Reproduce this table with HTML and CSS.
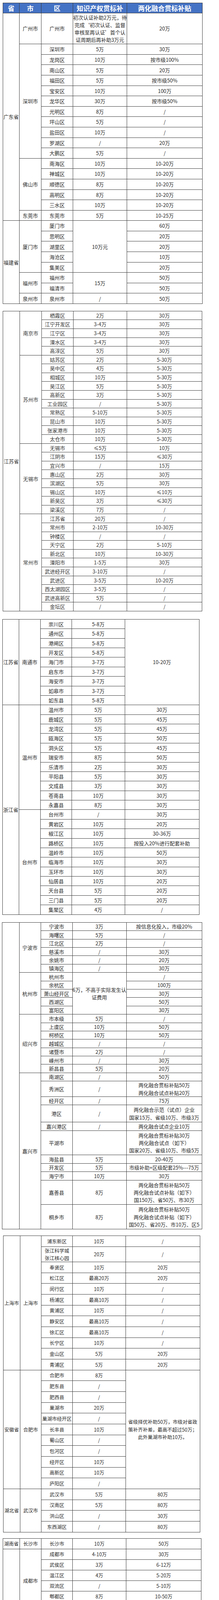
FILE: index.html
```html
<!DOCTYPE html>
<html lang="zh-CN">
<head>
<meta charset="utf-8">
<title>各地贯标补贴汇总</title>
<link rel="stylesheet" href="styles.css">
</head>
<body>
<div class="page">

<table class="grid t1">
<colgroup><col class="c1"><col class="c2"><col class="c3"><col class="c4"><col class="c5"></colgroup>
<tr class="head"><th>省</th><th>市</th><th>区</th><th>知识产权贯标补</th><th>两化融合贯标补贴</th></tr>
<tr class="tall"><td rowspan="18">广东省</td><td>广州市</td><td>广州市</td><td>初次认证补助2万元，待<br>完成‘初次认证、监督<br>审核至再认证’首个认<br>证周期后再补助3万元</td><td>20万</td></tr>
<tr><td rowspan="11">深圳市</td><td>深圳市</td><td>5万</td><td>30万</td></tr>
<tr><td>龙岗区</td><td>10万</td><td>按市级100%</td></tr>
<tr><td>南山区</td><td>5万</td><td>20万</td></tr>
<tr><td>福田区</td><td>5万</td><td>按市级50%</td></tr>
<tr><td>宝安区</td><td>10万</td><td>100万</td></tr>
<tr><td>龙华区</td><td>30万</td><td>按市级50%</td></tr>
<tr><td>光明区</td><td>8万</td><td>/</td></tr>
<tr><td>坪山区</td><td>5万</td><td>/</td></tr>
<tr><td>盐田区</td><td>10万</td><td>/</td></tr>
<tr><td>罗湖区</td><td>/</td><td>20万</td></tr>
<tr><td>大鹏区</td><td>5万</td><td>/</td></tr>
<tr><td rowspan="5">佛山市</td><td>南海区</td><td>10万</td><td>10-20万</td></tr>
<tr><td>禅城区</td><td>10万</td><td>10-20万</td></tr>
<tr><td>顺德区</td><td>8万</td><td>10-20万</td></tr>
<tr><td>高明区</td><td>8万</td><td>10-20万</td></tr>
<tr><td>三水区</td><td>10万</td><td>10-20万</td></tr>
<tr><td>东莞市</td><td>东莞市</td><td>5万</td><td>10-25万</td></tr>
<tr><td rowspan="8">福建省</td><td rowspan="5">厦门市</td><td>厦门市</td><td rowspan="5">10万元</td><td>60万</td></tr>
<tr><td>思明区</td><td>20万</td></tr>
<tr><td>湖里区</td><td>20万</td></tr>
<tr><td>海沧区</td><td>10万</td></tr>
<tr><td>集美区</td><td>20万</td></tr>
<tr><td rowspan="2">福州市</td><td>福州市</td><td rowspan="2">15万</td><td>50万</td></tr>
<tr><td>福清市</td><td>50万</td></tr>
<tr><td>泉州市</td><td>泉州市</td><td>/</td><td>50万</td></tr>
</table>

<table class="grid t2">
<colgroup><col class="c1"><col class="c2"><col class="c3"><col class="c4"><col class="c5"></colgroup>
<tr><td rowspan="34">江苏省</td><td rowspan="5">南京市</td><td>栖霞区</td><td>2万</td><td>30万</td></tr>
<tr><td>江宁开发区</td><td>3-4万</td><td>30万</td></tr>
<tr><td>江宁区</td><td>3-4万</td><td>30万</td></tr>
<tr><td>溧水区</td><td>3-4万</td><td>30万</td></tr>
<tr><td>高淳区</td><td>5万</td><td>30万</td></tr>
<tr><td rowspan="10">苏州市</td><td>姑苏区</td><td>2万</td><td>5-30万</td></tr>
<tr><td>吴中区</td><td>4万</td><td>5-30万</td></tr>
<tr><td>相城区</td><td>10万</td><td>5-30万</td></tr>
<tr><td>吴江区</td><td>5万</td><td>5-30万</td></tr>
<tr><td>高新区</td><td>3万</td><td>5-30万</td></tr>
<tr><td>工业园区</td><td>/</td><td>5-30万</td></tr>
<tr><td>常熟区</td><td>5-10万</td><td>5-30万</td></tr>
<tr><td>昆山市</td><td>10万</td><td>5-30万</td></tr>
<tr><td>张家港市</td><td>10万</td><td>5-30万</td></tr>
<tr><td>太仓市</td><td>10万</td><td>5-30万</td></tr>
<tr><td rowspan="8">无锡市</td><td>无锡市</td><td>≤5万</td><td>10万</td></tr>
<tr><td>江阴市</td><td>15万</td><td>≤30万</td></tr>
<tr><td>宜兴市</td><td>/</td><td>15万</td></tr>
<tr><td>惠山区</td><td>2万</td><td>30万</td></tr>
<tr><td>滨湖区</td><td>5万</td><td>30万</td></tr>
<tr><td>锡山区</td><td>10万</td><td>≤10万</td></tr>
<tr><td>新吴区</td><td>3万</td><td>≤30万</td></tr>
<tr><td>梁溪区</td><td>7万</td><td>/</td></tr>
<tr><td rowspan="11">常州市</td><td>江苏省</td><td>20万</td><td>/</td></tr>
<tr><td>常州市</td><td>2-10万</td><td>10-30万</td></tr>
<tr><td>钟楼区</td><td>/</td><td>/</td></tr>
<tr><td>天宁区</td><td>2万</td><td>5-10万</td></tr>
<tr><td>新北区</td><td>10万</td><td>10-30万</td></tr>
<tr><td>溧阳市</td><td>1-5万</td><td>30万</td></tr>
<tr><td>武进经开区</td><td>3-10万</td><td>/</td></tr>
<tr><td>武进区</td><td>3-5万</td><td>10-20万</td></tr>
<tr><td>西太湖园区</td><td>3-5万</td><td>/</td></tr>
<tr><td>武进高新区</td><td>5万</td><td>/</td></tr>
<tr><td>金坛区</td><td>/</td><td>/</td></tr>
</table>

<table class="grid t3">
<colgroup><col class="c1"><col class="c2"><col class="c3"><col class="c4"><col class="c5"></colgroup>
<tr><td rowspan="9">江苏省</td><td rowspan="9">南通市</td><td>崇川区</td><td>5-8万</td><td rowspan="9">10-20万</td></tr>
<tr><td>通州区</td><td>5-8万</td></tr>
<tr><td>港闸区</td><td>5-8万</td></tr>
<tr><td>开发区</td><td>5-8万</td></tr>
<tr><td>海门市</td><td>3-7万</td></tr>
<tr><td>启东市</td><td>3-7万</td></tr>
<tr><td>海安市</td><td>3-7万</td></tr>
<tr><td>如皋市</td><td>3-7万</td></tr>
<tr><td>如东县</td><td>5-8万</td></tr>
<tr><td rowspan="22">浙江省</td><td rowspan="11">温州市</td><td>温州市</td><td>5万</td><td>30万</td></tr>
<tr><td>鹿城区</td><td>5万</td><td>45万</td></tr>
<tr><td>龙湾区</td><td>5万</td><td>45万</td></tr>
<tr><td>瓯海区</td><td>5万</td><td>50万</td></tr>
<tr><td>洞头区</td><td>5万</td><td>45万</td></tr>
<tr><td>瑞安市</td><td>8万</td><td>50万</td></tr>
<tr><td>乐清市</td><td>2万</td><td>30万</td></tr>
<tr><td>平阳县</td><td>5万</td><td>30万</td></tr>
<tr><td>文成县</td><td>3万</td><td>30万</td></tr>
<tr><td>苍南县</td><td>10万</td><td>30万</td></tr>
<tr><td>永嘉县</td><td>8万</td><td>30万</td></tr>
<tr><td rowspan="11">台州市</td><td>台州市</td><td>/</td><td>30万</td></tr>
<tr><td>黄岩区</td><td>10万</td><td>20万</td></tr>
<tr><td>椒江区</td><td>10万</td><td>30-36万</td></tr>
<tr><td>路桥区</td><td>10万</td><td>按投入20%进行配套补助</td></tr>
<tr><td>温岭市</td><td>10万</td><td>50万</td></tr>
<tr><td>临海市</td><td>10万</td><td>30万</td></tr>
<tr><td>玉环市</td><td>10万</td><td>30万</td></tr>
<tr><td>仙居县</td><td>10万</td><td>20万</td></tr>
<tr><td>天台县</td><td>5万</td><td>20万</td></tr>
<tr><td>三门县</td><td>5万</td><td>20万</td></tr>
<tr><td>集聚区</td><td>4万</td><td>/</td></tr>
</table>

<table class="grid t4">
<colgroup><col class="c1"><col class="c2"><col class="c3"><col class="c4"><col class="c5"></colgroup>
<tr><td rowspan="29"></td><td rowspan="6">宁波市</td><td>宁波市</td><td>3万</td><td>按信息化投入，市级20%</td></tr>
<tr><td>海曙区</td><td>5万</td><td>/</td></tr>
<tr><td>江北区</td><td>2万</td><td>/</td></tr>
<tr><td>慈溪市</td><td>/</td><td>30万</td></tr>
<tr><td>余姚市</td><td>/</td><td>20万</td></tr>
<tr><td>镇海区</td><td>/</td><td>30万</td></tr>
<tr><td rowspan="5">杭州市</td><td>杭州市</td><td rowspan="5">6万，不高于实际发生认<br>证费用</td><td>/</td></tr>
<tr><td>余杭区</td><td>100万</td></tr>
<tr><td>萧山经开区</td><td>30万</td></tr>
<tr><td>西湖区</td><td>50万</td></tr>
<tr><td>富阳区</td><td>30万</td></tr>
<tr><td rowspan="7">绍兴市</td><td>市本级</td><td>5万</td><td>/</td></tr>
<tr><td>上虞区</td><td>10万</td><td>50万</td></tr>
<tr><td>柯桥区</td><td>10万</td><td>50万</td></tr>
<tr><td>越城区</td><td>/</td><td>/</td></tr>
<tr><td>诸暨市</td><td>2万</td><td>/</td></tr>
<tr><td>嵊州市</td><td>/</td><td>30万</td></tr>
<tr><td>新昌县</td><td>5万</td><td>20万</td></tr>
<tr><td rowspan="11">嘉兴市</td><td>南湖区</td><td>/</td><td>50万</td></tr>
<tr class="l2a"><td>秀洲区</td><td>/</td><td>两化融合贯标补贴50万<br>两化融合试点补贴20万</td></tr>
<tr><td>经开区</td><td>/</td><td>75万</td></tr>
<tr class="l2b"><td>港区</td><td>/</td><td>两化融合示范（试点）企业<br>国家15万、省级10万、市级3万</td></tr>
<tr><td>嘉兴港区</td><td>/</td><td>两化融合试点企业10万</td></tr>
<tr class="l3"><td>平湖市</td><td></td><td>两化融合贯标补贴30万<br>两化融合试点（如下）<br>国家20万、省级10万、市级5万</td></tr>
<tr><td>海盐县</td><td>5万</td><td>20-40万</td></tr>
<tr><td>开发区</td><td>5万</td><td>市级补助+区级配套25%---75万</td></tr>
<tr><td>海宁市</td><td>10万</td><td>30万</td></tr>
<tr class="l3"><td>嘉善县</td><td>8万</td><td>两化融合贯标补贴50万<br>两化融合试点补贴（如下）<br>国150万、省50万、市30万</td></tr>
<tr class="l3"><td>桐乡市</td><td>8万</td><td>两化融合贯标补贴50万<br>两化融合试点补贴（如下）<br>国50万、省20万、市10万、区5</td></tr>
</table>

<table class="grid t5">
<colgroup><col class="c1"><col class="c2"><col class="c3"><col class="c4"><col class="c5"></colgroup>
<tr><td rowspan="12">上海市</td><td rowspan="12">上海市</td><td>浦东新区</td><td>10万</td><td>/</td></tr>
<tr class="l2"><td>张江科学城<br>张江核心园</td><td>20万</td><td>/</td></tr>
<tr><td>奉贤区</td><td>10万</td><td>20万</td></tr>
<tr><td>松江区</td><td>最高20万</td><td>20万</td></tr>
<tr><td>闵行区</td><td>10万</td><td>/</td></tr>
<tr><td>杨浦区</td><td>最高10万</td><td>/</td></tr>
<tr><td>黄浦区</td><td>10万</td><td>/</td></tr>
<tr><td>静安区</td><td>最高10万</td><td>/</td></tr>
<tr><td>徐汇区</td><td>最高10万</td><td>/</td></tr>
<tr><td>长宁区</td><td>10万</td><td>/</td></tr>
<tr><td>金山区</td><td>5万</td><td>20万</td></tr>
<tr><td>青浦区</td><td>5万</td><td>20万</td></tr>
<tr><td rowspan="11">安徽省</td><td rowspan="11">合肥市</td><td>合肥市</td><td>8万</td><td rowspan="11">省级择优补助50万，市级对省政<br>策补齐补差，最高不超过50万；<br>此外巢湖市补助10万。</td></tr>
<tr><td>肥东县</td><td>/</td></tr>
<tr><td>肥西县</td><td>/</td></tr>
<tr><td>巢湖市</td><td>20万</td></tr>
<tr><td>巢湖市经开区</td><td>/</td></tr>
<tr><td>长丰县</td><td>10万</td></tr>
<tr><td>蜀山区</td><td>/</td></tr>
<tr><td>包河区</td><td>/</td></tr>
<tr><td>经开区</td><td>10万</td></tr>
<tr><td>高新区</td><td>10万</td></tr>
<tr><td>庐阳区</td><td>/</td></tr>
<tr><td rowspan="4">湖北省</td><td rowspan="4">武汉市</td><td>武汉市</td><td>5万</td><td>80万</td></tr>
<tr><td>汉南区</td><td>5万</td><td>80万</td></tr>
<tr><td>洪山区</td><td>/</td><td>30万</td></tr>
<tr><td>东西湖区</td><td>/</td><td>80万</td></tr>
</table>

<table class="grid t6">
<colgroup><col class="c1"><col class="c2"><col class="c3"><col class="c4"><col class="c5"></colgroup>
<tr><td>湖南省</td><td>长沙市</td><td>长沙市</td><td>10万</td><td>50万</td></tr>
<tr><td rowspan="12">四川省</td><td rowspan="6">成都市</td><td>成都市</td><td>4-10万</td><td>30万</td></tr>
<tr><td>武侯区</td><td>3万</td><td>6-12万</td></tr>
<tr><td>温江区</td><td>4万</td><td>5-20万</td></tr>
<tr><td>双流区</td><td>/</td><td>5-10万</td></tr>
<tr><td>郫都区</td><td>8万</td><td>10-50万</td></tr>
<tr><td>高新区</td><td>2万</td><td>/</td></tr>
<tr><td>眉山市</td><td>东坡区</td><td>/</td><td>10-50万</td></tr>
<tr><td>泸州市</td><td>泸州市</td><td>/</td><td>20-30万</td></tr>
<tr><td>德阳市</td><td>德阳市</td><td>/</td><td>10万</td></tr>
<tr><td>遂宁市</td><td>遂宁市</td><td>/</td><td>10-20万</td></tr>
<tr><td>乐山市</td><td>乐山市</td><td>/</td><td>10-20万</td></tr>
<tr><td>南充市</td><td>南充市</td><td>/</td><td>最高50万</td></tr>
<tr><td rowspan="15">重庆市</td><td rowspan="15">重庆市</td><td>重庆市</td><td>3万</td><td rowspan="15">30万</td></tr>
<tr><td>九龙坡</td><td>5万</td></tr>
<tr><td>南岸区</td><td>5万</td></tr>
<tr><td>渝北区</td><td>5万</td></tr>
<tr><td>渝中区</td><td>/</td></tr>
<tr><td>江北区</td><td>10万</td></tr>
<tr><td>两江新区</td><td>10万</td></tr>
<tr><td>大足区</td><td>5万</td></tr>
<tr><td>铜梁区</td><td>8万</td></tr>
<tr><td>梁平区</td><td>5万</td></tr>
<tr><td>忠县</td><td>5万</td></tr>
<tr><td>万盛经开区</td><td>5万</td></tr>
<tr><td>潼南区</td><td>5万 已经取消</td></tr>
<tr><td>合川区</td><td>20万</td></tr>
<tr><td>长寿区</td><td>10万</td></tr>
</table>

<table class="grid t7">
<colgroup><col class="c1"><col class="c2"><col class="c3"><col class="c4"><col class="c5"></colgroup>
<tr><td rowspan="8">山东省</td><td>济南市</td><td>济南市</td><td>5万-10万</td><td>45万（市30万，区配套15万）</td></tr>
<tr><td rowspan="4">青岛市</td><td>城阳区</td><td>/</td><td>50万</td></tr>
<tr><td>即墨区</td><td>/</td><td>50万</td></tr>
<tr><td>胶州市</td><td>/</td><td>50万</td></tr>
<tr><td>黄岛区</td><td>/</td><td>50万</td></tr>
<tr><td>烟台市</td><td>开发区</td><td>10万</td><td>/</td></tr>
<tr><td>烟台市</td><td>芝罘区</td><td>10万</td><td>/</td></tr>
<tr><td>威海市</td><td>环翠区</td><td>5万</td><td>15万</td></tr>
<tr><td>陕西省</td><td>西安市</td><td>西安市</td><td>5-10万</td><td>20-30万</td></tr>
<tr><td rowspan="9">河南省</td><td rowspan="9">郑州市</td><td>郑州市</td><td>5-10万</td><td rowspan="9">省100万，市50万</td></tr>
<tr><td>二七区</td><td>10万</td></tr>
<tr><td>新密市</td><td>10万</td></tr>
<tr><td>荥阳市</td><td>5-15万</td></tr>
<tr><td>郑东新区</td><td>10万</td></tr>
<tr><td>航空港区</td><td>20万</td></tr>
<tr><td>中牟县</td><td>10万</td></tr>
<tr><td>高新区</td><td>10万</td></tr>
<tr><td>上街区</td><td>20万</td></tr>
<tr><td>天津市</td><td>天津市</td><td>天津市</td><td>/</td><td>试点和贯标共同通过，最高50万</td></tr>
<tr><td rowspan="2">河北省</td><td>石家庄</td><td>石家庄市</td><td>6-10万</td><td>/</td></tr>
<tr><td>唐山市</td><td>唐山市</td><td>6万</td><td>10万-30万</td></tr>
<tr><td rowspan="8">北京市</td><td rowspan="8">北京市</td><td>朝阳区</td><td>15万</td><td rowspan="8">30万（先做试点才有资金补贴，<br>未做试点的无资金补贴）</td></tr>
<tr><td>通州区</td><td>10万</td></tr>
<tr><td>昌平区</td><td>5万</td></tr>
<tr><td>丰台区</td><td>5万</td></tr>
<tr><td>西城区</td><td>5万</td></tr>
<tr><td>海淀区</td><td>不超过10万</td></tr>
<tr><td>大兴区</td><td>8万</td></tr>
<tr><td>顺义区</td><td>10万</td></tr>
</table>

</div>
</body>
</html>
```

FILE: styles.css
```css
html, body {
  margin: 0;
  padding: 0;
  background: #ffffff;
}

body {
  font-family: "Noto Sans CJK SC", "Microsoft YaHei", "Noto Sans", sans-serif;
  color: #2b2b2b;
}

.page {
  width: 560px;
  padding-top: 7px;
}

.grid {
  border-collapse: collapse;
  table-layout: fixed;
  font-size: 13px;
  line-height: 19.3px;
}

.grid td,
.grid th {
  border: 1px solid #3a3a3a;
  padding: 0;
  text-align: center;
  vertical-align: middle;
  white-space: nowrap;
}

.grid .head th {
  background: #4472c4;
  color: #ffffff;
  font-size: 17px;
  font-weight: bold;
  line-height: 22px;
}

/* 广东 / 福建 */
.t1 { margin-left: 7px; width: 510px; }
.t1 .c1 { width: 42px; }
.t1 .c2 { width: 56px; }
.t1 .c3 { width: 81px; }
.t1 .c4 { width: 138px; }
.t1 .c5 { width: 193px; }
.t1 tr { height: 26.6px; }
.t1 tr.head { height: 26px; }
.t1 tr.tall { height: 79.2px; }

/* 江苏 */
.t2 { margin: 17.7px 0 0 7px; width: 509px; color: #383838; }
.t2 .c1 { width: 43px; }
.t2 .c2 { width: 56px; }
.t2 .c3 { width: 81px; }
.t2 .c4 { width: 137px; }
.t2 .c5 { width: 192px; }
.t2 tr { height: 22.6px; }

/* 南通 / 浙江 */
.t3 { margin: 20px 0 0 6px; width: 502.5px; }
.t3 .c1 { width: 42px; }
.t3 .c2 { width: 55px; }
.t3 .c3 { width: 80px; }
.t3 .c4 { width: 135.5px; }
.t3 .c5 { width: 190px; }
.t3 tr { height: 24.39px; }

/* 宁波 / 杭州 / 绍兴 / 嘉兴 */
.t4 { margin: 19.3px 0 0 5px; width: 511px; }
.t4 .c1 { width: 43.5px; }
.t4 .c2 { width: 55px; }
.t4 .c3 { width: 81px; }
.t4 .c4 { width: 138px; }
.t4 .c5 { width: 193.5px; }
.t4 tr { height: 21.4px; }
.t4 tr.l2a { height: 39px; }
.t4 tr.l2b { height: 44px; }
.t4 tr.l3 { height: 62.8px; }

/* 上海 / 安徽 / 湖北 */
.t5 { margin: 15.7px 0 0 8px; width: 502.5px; font-size: 12.5px; }
.t5 .c1 { width: 42.5px; }
.t5 .c2 { width: 54.5px; }
.t5 .c3 { width: 80px; }
.t5 .c4 { width: 135.5px; }
.t5 .c5 { width: 190px; }
.t5 tr { height: 27.67px; }
.t5 tr.l2 { height: 39px; }

/* 湖南 / 四川 / 重庆 */
.t6 { margin: 15.6px 0 0 7px; width: 507px; font-size: 12.5px; }
.t6 .c1 { width: 43px; }
.t6 .c2 { width: 55px; }
.t6 .c3 { width: 80px; }
.t6 .c4 { width: 137px; }
.t6 .c5 { width: 192px; }
.t6 tr { height: 26.97px; }

/* 山东 / 陕西 / 河南 / 天津 / 河北 / 北京 */
.t7 { margin: 12.4px 0 0 7px; width: 501px; font-size: 12.5px; }
.t7 .c1 { width: 42px; }
.t7 .c2 { width: 54px; }
.t7 .c3 { width: 80px; }
.t7 .c4 { width: 135px; }
.t7 .c5 { width: 190px; }
.t7 tr { height: 26.06px; }
```
